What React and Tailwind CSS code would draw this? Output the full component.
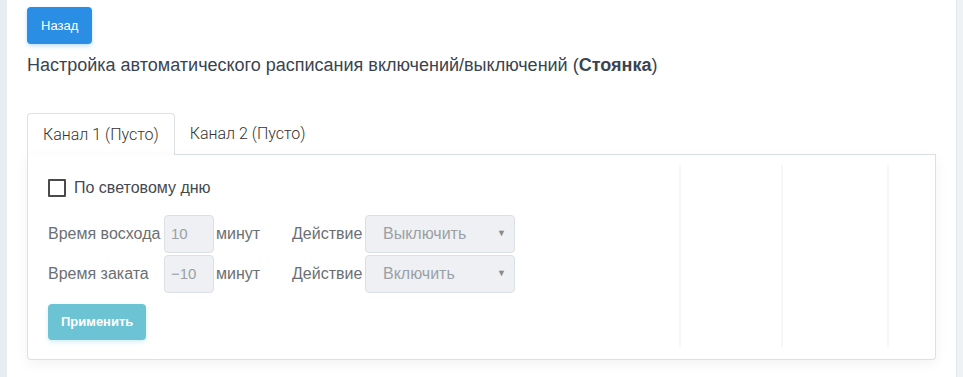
import React from 'react';

function NumberInput({ value }) {
  return (
    <div className="w-[50px] h-[38px] bg-[#eef0f3] border border-[#dcdfe3] rounded-[4px] flex items-center px-[6px] text-[15px] text-[#9aa0a6]">
      {value}
    </div>
  );
}

function ActionSelect({ value }) {
  return (
    <div className="w-[150px] h-[38px] bg-[#eef0f3] border border-[#dcdfe3] rounded-[4px] flex items-center justify-between pl-[17px] pr-[8px] text-[16px] text-[#9aa0a6]">
      <span>{value}</span>
      <span className="text-[9px] text-[#888]">▼</span>
    </div>
  );
}

function ScheduleRow({ label, value, action }) {
  return (
    <div className="flex items-center h-[38px]">
      <span className="w-[116px] text-[16px] text-[#6b6f73]">{label}</span>
      <NumberInput value={value} />
      <span className="ml-[2px] w-[76px] text-[16px] text-[#6b6f73]">минут</span>
      <span className="w-[73px] text-[16px] text-[#6b6f73]">Действие</span>
      <ActionSelect value={action} />
    </div>
  );
}

export default function App() {
  return (
    <div className="w-[963px] h-[377px] overflow-hidden flex bg-white font-['Liberation_Sans',Arial,sans-serif]">
      {/* left sidebar edge */}
      <div className="w-[7px] shrink-0 bg-[#e7edf1]" />

      <div className="flex-1 pl-[20px] pr-[20px] pt-[7px]">
        <button className="h-[37px] px-[14px] bg-[#2a8ee5] text-white text-[13px] rounded-[4px] shadow-[0_2px_4px_rgba(42,142,229,0.3)]">
          Назад
        </button>

        <p className="mt-[9px] text-[18px] text-[#3a4450] leading-[24px]">
          Настройка автоматического расписания включений/выключений (<b>Стоянка</b>)
        </p>

        {/* tabs */}
        <div className="mt-[36px] flex items-end border-b border-[#dde1e5]">
          <div className="h-[42px] px-[15px] flex items-center border border-b-0 border-[#dde1e5] rounded-t-[4px] bg-white -mb-px font-['Roboto',sans-serif] font-light text-[16px] text-[#333]">
            Канал 1&nbsp;(Пусто)
          </div>
          <div className="h-[41px] px-[15px] flex items-center font-['Roboto',sans-serif] font-light text-[16px] text-[#333]">
            Канал 2 (Пусто)
          </div>
        </div>

        {/* tab panel */}
        <div className="relative h-[205px] bg-white border border-t-0 border-[#dde1e5] rounded-b-[4px] shadow-[0_4px_14px_rgba(0,0,0,0.05)] pl-[20px] pt-[21px]">
          <div className="absolute top-[10px] bottom-[12px] left-[651px] w-[104px] border-x-2 border-[#f7f7f7]" />
          <div className="absolute top-[10px] bottom-[12px] left-[859px] w-0 border-l-2 border-[#f7f7f7]" />

          <label className="flex items-center gap-[8px] text-[16px] text-[#454a4f]">
            <span className="w-[18px] h-[18px] border-2 border-[#4a4a4a] rounded-[1px]" />
            По световому дню
          </label>

          <div className="mt-[15px] flex flex-col gap-[2px]">
            <ScheduleRow label="Время восхода" value="10" action="Выключить" />
            <ScheduleRow label="Время заката" value="−10" action="Включить" />
          </div>

          <button className="mt-[11px] h-[36px] px-[13px] bg-[#6cc3d4] text-white text-[13px] font-semibold rounded-[4px] shadow-[0_2px_4px_rgba(108,195,212,0.3)]">
            Применить
          </button>
        </div>
      </div>

      {/* right edge */}
      <div className="w-[7px] shrink-0 bg-[#eef2f5] border-l border-[#e2e7eb]" />
    </div>
  );
}
